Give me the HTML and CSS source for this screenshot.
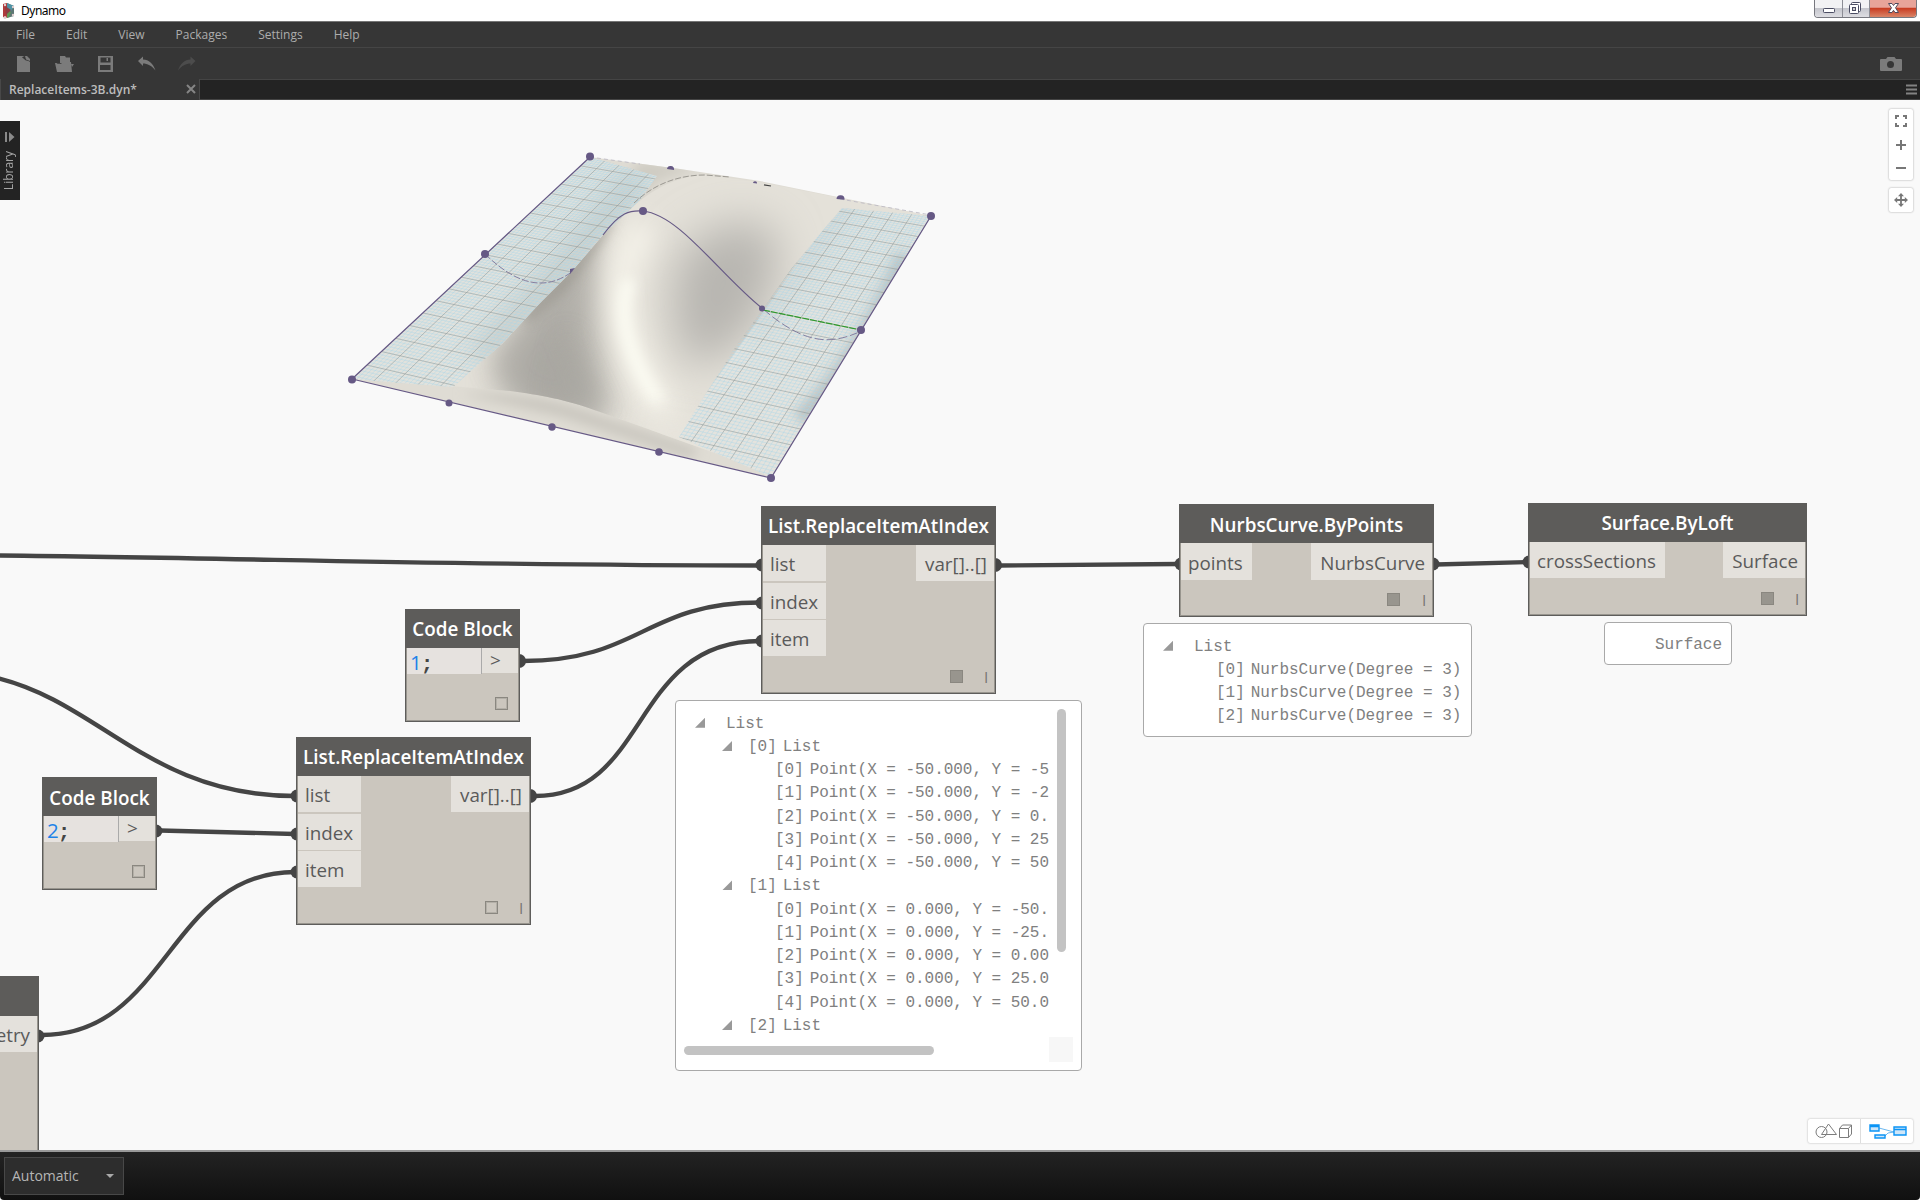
FILE: index.html
```html
<!DOCTYPE html>
<html lang="en">
<head>
<meta charset="utf-8">
<title>Dynamo</title>
<link rel="stylesheet" href="styles.css">
</head>
<body>
<div class="app">
  <header class="titlebar">
    <svg class="logo" width="14" height="18" viewBox="0 0 14 18"><path d="M1 2 5 1V16L1 15z" fill="#b03a3c"/><path d="M5 1 12 4V14L5 16z" fill="#5d7774"/><path d="M5 1 12 4 9 9 5 8z" fill="#4e93a5"/><path d="M5 9 9 10 7 15 5 16z" fill="#5f9a55"/><path d="M3 4 9 8 4 13z" fill="#8f3f44"/><g fill="#e3cfcf"><circle cx="3" cy="3" r="1.2"/><circle cx="11" cy="5" r="1.2"/><circle cx="11" cy="13" r="1.2"/><circle cx="3" cy="15.500" r="1.500"/></g></svg>
    <span class="apptitle">Dynamo</span>
    <div class="winbtns">
      <span class="wb wmin"><svg width="27" height="17"><rect x="8.500" y="8.500" width="11" height="4" rx=".8" fill="#fff" stroke="#4b4d63"/></svg></span>
      <span class="wb wmax"><svg width="26" height="17"><rect x="8.500" y="2.500" width="9" height="9" rx="1" fill="#fff" stroke="#4b4d63"/><rect x="6.500" y="4.500" width="9" height="9" rx="1" fill="#fff" stroke="#4b4d63"/><rect x="9.500" y="7.500" width="3" height="3" fill="#ccc" stroke="#4b4d63"/></svg></span>
      <span class="wb wclose"><svg width="46" height="17"><path d="M18.500 3.500h3.500l1.500 2 1.500-2h3.500l-3 4.300 3 4.700h-3.500l-1.500-2.200-1.500 2.200h-3.500l3-4.700z" fill="#fff" stroke="#504a5c"/></svg></span>
    </div>
  </header>
  <nav class="menu"><span>File</span><span>Edit</span><span>View</span><span>Packages</span><span>Settings</span><span>Help</span></nav>
  <div class="toolbar">
    <svg width="200" height="30" viewBox="0 0 200 30">
      <g fill="#7b7b7b">
        <path d="M17 8h7l6 6v10H17z"/><path d="M24.500 8 30 13.500l-4.500-1.200-3.500-3z" fill="#363636"/><path d="M25 8h2l3 3v2l-4-1.500z"/>
        <path d="M60 8h5l1 1.500h4V14h-4l-1.500 1H60z"/><path d="M55 15h1.500l1 .7H61l2-1.700h8L72 24H57z"/><path d="M71 16h3l-2 3z"/>
        <path fill-rule="evenodd" d="M98 8h15v16H98zM100.500 9.500v5h10v-5zM100 17v5h10.500v-5z"/><path d="M106.500 10h1.500v3h-1.500z"/>
        <path d="M138 13l5-4.500v3c6 0 10 4 12.500 11-4-5-8-7-12.500-7v2.500z"/>
      </g>
      <path d="M195.500 13l-5-4.500v3c-6 0-10 4-12.500 11 4-5 8-7 12.500-7v2.500z" fill="#4c4c4c"/>
    </svg>
    <svg class="camera" width="22" height="16" viewBox="0 0 22 16"><path d="M1 3h5l1.500-2h7L16 3h5a1 1 0 0 1 1 1v10a1 1 0 0 1-1 1H1a1 1 0 0 1-1-1V4a1 1 0 0 1 1-1z" fill="#7b7b7b"/><circle cx="10.500" cy="8.500" r="3.500" fill="#363636"/></svg>
  </div>
  <div class="tabs">
    <div class="tab"><span>ReplaceItems-3B.dyn*</span><svg width="10" height="10"><path d="M1 1l8 8M9 1l-8 8" stroke="#858585" stroke-width="2"/></svg></div>
    <svg class="burger" width="11" height="11"><path d="M0 1.500h11M0 5.500h11M0 9.500h11" stroke="#828282" stroke-width="2"/></svg>
  </div>
  <main class="canvas">
    <svg class="scene" width="1920" height="1050" viewBox="0 100 1920 1050">
      <defs>
        <clipPath id="quad"><path d="M352 379 590 157 680 169 760 181 931 216 771 478z"/></clipPath>
        <clipPath id="hill"><path d="M352 379 454 386 503 343 540 303 573 270 603 235 626 213C648 192 674 176 705 175L760 182 931 216 771 478 742 463C690 444 640 426 600 412C565 399 540 395 510 391C460 387 400 381 352 379z"/></clipPath>
        <clipPath id="gridL"><path d="M352 379 590 157 657 176 640 200 603 235 573 270 540 303 503 343 453 387 400 383z"/></clipPath>
        <clipPath id="gridR"><path d="M842 208 824 229 792 268 763 309 732 352 726 362 698 406 679 437 771 477 931 216z"/></clipPath>
        <filter id="b6" filterUnits="userSpaceOnUse" x="300" y="100" width="700" height="450"><feGaussianBlur stdDeviation="6"/></filter>
        <filter id="b12" filterUnits="userSpaceOnUse" x="300" y="100" width="700" height="450"><feGaussianBlur stdDeviation="12"/></filter>
        <filter id="b22" filterUnits="userSpaceOnUse" x="300" y="100" width="700" height="450"><feGaussianBlur stdDeviation="22"/></filter>
      </defs>
      <path d="M352 379 590 157 680 169 760 181 931 216 771 478z" fill="#dfdcd4"/>
      <g clip-path="url(#quad)">
        <path d="M460 393C530 392 570 404 610 420L700 450 690 458 560 416z" fill="#c8c5bd" filter="url(#b6)"/>
        <path d="M600 230 660 180 700 168 640 160z" fill="#cfccc3" filter="url(#b6)"/>
      </g>
      <g clip-path="url(#hill)">
        <path d="M340 380 590 150 940 210 775 490z" fill="#e4e1d9"/>
        <path d="M510 350 570 275 595 272 602 400 570 440 500 395z" fill="#adaba5" filter="url(#b22)"/>
        <path d="M490 365 540 295 590 245 605 235 595 280 565 330 605 420 520 400z" fill="#a8a6a0" opacity=".65" filter="url(#b12)"/>
        <path d="M520 318 600 228 620 210 606 238 568 288 530 322z" fill="#8f8c84" opacity=".6" filter="url(#b6)"/>
        <path d="M695 240C670 260 660 320 690 365C740 365 790 290 775 235C755 215 725 220 695 240z" fill="#b8b6b1" filter="url(#b22)"/>
        <path d="M640 235C608 280 616 345 662 408" fill="none" stroke="#f4f2e9" stroke-width="28" stroke-linecap="round" filter="url(#b12)"/>
        <path d="M628 285C618 315 628 355 656 398" fill="none" stroke="#fbfbf2" stroke-width="13" stroke-linecap="round" filter="url(#b6)"/>
        <path d="M565 330C585 360 595 385 612 410L550 400z" fill="#a9a7a1" opacity=".55" filter="url(#b12)"/>
        <path d="M640 440 720 470 700 420 650 410z" fill="#e9e6de" opacity=".6" filter="url(#b12)"/>
      </g>
      <g clip-path="url(#gridL)"><path d="M340 380 590 150 690 170 450 395z" fill="#e1e2dd"/><path d="M640 175 550 285 480 360" fill="none" stroke="#a8b0ae" stroke-width="28" opacity=".4" filter="url(#b12)"/><g class="grid"></g></g>
      <g clip-path="url(#gridR)"><path d="M842 200 670 445 775 480 935 210z" fill="#e3e3de"/><path d="M905 255Q860 360 800 420" fill="none" stroke="#a0aaac" stroke-width="17" opacity=".6" filter="url(#b6)"/><path d="M850 190 750 330" fill="none" stroke="#b4bcbb" stroke-width="22" opacity=".3" filter="url(#b12)"/><g class="grid"></g></g>
      <g fill="none" stroke="#665985" stroke-width="1.200">
        <path d="M590 157 352 379 771 478 931 216"/>
        <path d="M590 157 640 164M840 199 931 215" stroke="#b9b6c2" stroke-width=".8" stroke-dasharray="4 3"/>
        <path d="M603 235C620 212 630 210 643 211C680 215 720 275 763 309"/>
        <path d="M485 254C520 288 548 290 573 271" stroke="#857fa0" stroke-width="1" stroke-dasharray="7 2"/>
        <path d="M763 309C805 345 830 344 857 333" stroke="#857fa0" stroke-width="1" stroke-dasharray="9 3"/>
        <path d="M763 310 861 330" stroke="#2f9a2c" stroke-dasharray="7 1"/>
        <path d="M634 203C655 183 680 175 705 175L730 177" stroke="#8a8882" stroke-width=".8" stroke-dasharray="6 2"/>
        <path d="M764 184.800 771 186" stroke="#444" stroke-width="1.200"/>
      </g>
      <g fill="#665985">
        <circle cx="352" cy="379.500" r="4"/><circle cx="590" cy="156.500" r="4"/><circle cx="485" cy="254" r="4"/><circle cx="449" cy="403" r="3.500"/><circle cx="552" cy="427" r="3.700"/><circle cx="659" cy="452" r="3.800"/><circle cx="771" cy="478" r="4"/><circle cx="861" cy="330" r="4"/><circle cx="931" cy="216" r="4"/><circle cx="643" cy="211" r="4"/><circle cx="762" cy="308.500" r="3"/>
        <path d="M570 274v-5l5-1zM667 169a3.500 3.500 0 0 1 7 1zM753 183a2 2 0 0 1 4 .5zM836.500 199a4 4 0 0 1 8 .7z"/>
      </g>
      <g fill="none" stroke="#454545" stroke-width="4.300">
        <path d="M0 555.500C250 558 450 565.500 760 565.500"/>
        <path d="M523 661C640 661 645 602.500 760 602.500"/>
        <path d="M535 796C650 796 630 641 760 641"/>
        <path d="M-5 677.500C100 702 150 796 295 796"/>
        <path d="M160 830.500 295 834"/>
        <path d="M42 1035C168 1035 168 872 295 872"/>
        <path d="M1000 565.500 1178 564"/>
        <path d="M1436 564.500 1527 562"/>
      </g>
      <g fill="#454545">
        <circle cx="762" cy="565" r="6.500"/><circle cx="762" cy="603" r="6.500"/><circle cx="762" cy="641" r="6.500"/><circle cx="995" cy="565" r="7"/>
        <circle cx="297" cy="796" r="6.500"/><circle cx="297" cy="834" r="6.500"/><circle cx="297" cy="872" r="6.500"/><circle cx="530" cy="796" r="7"/>
        <circle cx="519" cy="661" r="7"/><circle cx="156" cy="831" r="6.500"/><circle cx="38" cy="1036" r="6.500"/>
        <circle cx="1181" cy="564" r="6.500"/><circle cx="1433" cy="564" r="6.500"/><circle cx="1529" cy="562" r="6.500"/>
      </g>
    </svg>

    <section class="node n-a"><h2>List.ReplaceItemAtIndex</h2><div class="ports"><div class="ins three"><span>list</span><span>index</span><span>item</span></div><div class="outs"><span>var[]..[]</span></div></div><i class="box on"></i><b class="lace">l</b></section>
    <section class="node n-b"><h2>List.ReplaceItemAtIndex</h2><div class="ports"><div class="ins three"><span>list</span><span>index</span><span>item</span></div><div class="outs"><span>var[]..[]</span></div></div><i class="box"></i><b class="lace">l</b></section>
    <section class="node n-nc"><h2>NurbsCurve.ByPoints</h2><div class="ports"><div class="ins"><span>points</span></div><div class="outs"><span>NurbsCurve</span></div></div><i class="box on"></i><b class="lace">l</b></section>
    <section class="node n-s"><h2>Surface.ByLoft</h2><div class="ports"><div class="ins"><span>crossSections</span></div><div class="outs"><span>Surface</span></div></div><i class="box on"></i><b class="lace">l</b></section>
    <section class="node n-c1 code"><h2>Code Block</h2><div class="ports"><div class="src"><em>1</em>;</div><div class="gt">&gt;</div></div><i class="box"></i></section>
    <section class="node n-c2 code"><h2>Code Block</h2><div class="ports"><div class="src"><em>2</em>;</div><div class="gt">&gt;</div></div><i class="box"></i></section>
    <section class="node n-l"><h2></h2><div class="ports"><div></div><div class="outs"><span>etry</span></div></div></section>

    <div class="preview p-a">
      <div class="rows">
        <div class="row l0"><i class="tri"></i><span>List</span></div>
        <div class="row l1"><i class="tri"></i><u>[0]</u><span>List</span></div>
        <div class="row l2"><u>[0]</u><span>Point(X = -50.000, Y = -5</span></div>
        <div class="row l2"><u>[1]</u><span>Point(X = -50.000, Y = -2</span></div>
        <div class="row l2"><u>[2]</u><span>Point(X = -50.000, Y = 0.</span></div>
        <div class="row l2"><u>[3]</u><span>Point(X = -50.000, Y = 25</span></div>
        <div class="row l2"><u>[4]</u><span>Point(X = -50.000, Y = 50</span></div>
        <div class="row l1"><i class="tri"></i><u>[1]</u><span>List</span></div>
        <div class="row l2"><u>[0]</u><span>Point(X = 0.000, Y = -50.</span></div>
        <div class="row l2"><u>[1]</u><span>Point(X = 0.000, Y = -25.</span></div>
        <div class="row l2"><u>[2]</u><span>Point(X = 0.000, Y = 0.00</span></div>
        <div class="row l2"><u>[3]</u><span>Point(X = 0.000, Y = 25.0</span></div>
        <div class="row l2"><u>[4]</u><span>Point(X = 0.000, Y = 50.0</span></div>
        <div class="row l1"><i class="tri"></i><u>[2]</u><span>List</span></div>
      </div>
      <i class="vbar"></i><i class="hbar"></i><i class="grip"></i>
    </div>
    <div class="preview p-nc">
      <div class="rows">
        <div class="row l0"><i class="tri"></i><span>List</span></div>
        <div class="row lx"><u>[0]</u><span>NurbsCurve(Degree = 3)</span></div>
        <div class="row lx"><u>[1]</u><span>NurbsCurve(Degree = 3)</span></div>
        <div class="row lx"><u>[2]</u><span>NurbsCurve(Degree = 3)</span></div>
      </div>
    </div>
    <div class="preview p-s">Surface</div>

    <aside class="library"><svg width="10" height="10"><path d="M0 0h2v10H0zM4 0l5.500 5L4 10z" fill="#8a8a8a"/></svg><span>Library</span></aside>
    <div class="zoom">
      <svg width="12" height="12"><path d="M1 4V1h3M8 1h3v3M11 8v3H8M4 11H1V8" fill="none" stroke="#777" stroke-width="2"/></svg>
      <svg width="12" height="12"><path d="M1 6h10M6 1v10" stroke="#777" stroke-width="2"/></svg>
      <svg width="12" height="12"><path d="M1 5h10" stroke="#777" stroke-width="2"/></svg>
    </div>
    <div class="pan"><svg width="14" height="14" viewBox="0 0 14 14"><path d="M2 7h10M7 2v10" stroke="#777" stroke-width="1.800"/><path d="M7 0l3 3.200H4zM7 14l3-3.200H4zM0 7l3.200-3v6zM14 7l-3.200-3v6z" fill="#777"/></svg></div>
    <div class="modes">
      <span class="mode"><svg width="38" height="18" fill="none" stroke="#7c7c7c"><circle cx="6.500" cy="10" r="5.500"/><path d="M6.500 12.500 13.500 2 21.500 12.500z"/><path d="M24.500 6.500h9v9h-9zM24.500 6.500l3-3.500h9v9l-3 3.500M33.500 6.500l3-3.500"/></svg></span>
      <span class="mode"><svg width="38" height="18" fill="#cfe6f8" stroke="#0b94f5" stroke-width="1.400"><path d="M10 6l15 4-6 1-3 3" fill="none" stroke="#6bb8f0" stroke-width="1"/><path d="M1 3h9v6H1zM1 4.500h9M6 13h10v3H6zM25 5h12v8H25zM25 7.500h12"/></svg></span>
    </div>
  </main>
  <footer class="status"><div class="select"><span>Automatic</span><svg width="8" height="4"><path d="M0 0h8L4 4z" fill="#a9a9a9"/></svg></div></footer>
</div>
<script src="grid.js"></script>
</body>
</html>
```
FILE: styles.css
```css
* { box-sizing: border-box; }
body { margin: 0; background: #fff; font-family: "Open Sans", sans-serif; overflow: hidden; }
.app { width: 1920px; height: 1200px; display: flex; flex-direction: column; }
svg { display: block; flex: none; }
.titlebar { height: 22px; flex: none; background: #fff; border-bottom: 1px solid #767676; display: flex; align-items: center; padding-left: 2px; position: relative; }
.apptitle { font: 12px "Noto Sans", sans-serif; letter-spacing: -.5px; color: #000; margin-left: 5px; }
.winbtns { margin-left: auto; margin-right: 3px; align-self: flex-start; display: flex; height: 18px; border: 1px solid #77787f; border-top: 0; border-radius: 0 0 4px 4px; overflow: hidden; }
.wb { background: linear-gradient(#f2f2f4 45%, #c5c6cd 50%, #dddde2); border-right: 1px solid #8c8d95; }
.wclose { background: linear-gradient(#e8a49a 42%, #c93e24 50%, #d98467); border: 0; }
.menu { height: 26px; flex: none; background: #363636; border-bottom: 1px solid #454545; display: flex; gap: 31px; align-items: center; padding: 0 16px; font-size: 12px; color: #adadad; }
.toolbar { height: 31px; flex: none; background: #363636; display: flex; justify-content: space-between; align-items: flex-start; }
.camera { margin: 8px 18px 0 0; }
.tabs { height: 21px; flex: none; background: #232323; border-top: 1px solid #444; border-bottom: 1px solid #444; display: flex; justify-content: space-between; align-items: center; padding-right: 3px; }
.tab { width: 200px; height: 21px; margin-top: -1px; background: #363636; border-right: 1px solid #484848; border-left: 1px solid #484848; padding: 0 3px 0 8px; display: flex; align-items: center; justify-content: space-between; color: #bdbdbd; font-size: 12px; font-weight: 600; }
.canvas { position: relative; flex: 1; min-height: 0; background: #f9f9f9; overflow: hidden; }
.scene { position: absolute; left: 0; top: 0; }
.node { position: absolute; width: 235px; height: 188px; background: #cbc6be; border: 1px solid #5e5d5b; box-shadow: inset -1px -1px 0 #98958e, inset 1px 0 0 #98958e; color: #5a5a5a; }
.node h2 { margin: -1px; height: 39px; background: #5d5c5a; color: #fff; font-size: 18.850px; font-weight: 600; line-height: 41px; text-align: center; white-space: nowrap; }
.ports { display: flex; justify-content: space-between; align-items: flex-start; margin: 1px 1px 0 1px; }
.ports span { display: block; background: #e4e1dc; height: 36px; line-height: 39px; font-size: 18.800px; padding: 0 9px 0 7px; white-space: nowrap; }
.ins { display: flex; flex-direction: column; gap: 1.500px; }
.three { width: 63px; }
.ports .outs span { padding: 0 7px 0 9px; }
.box { position: absolute; right: 32px; bottom: 10px; width: 13px; height: 13px; border: 1px solid #8a8780; box-shadow: inset 0 0 0 1px #b3afa7; }
.box.on { background: #98958e; box-shadow: none; }
.lace { position: absolute; right: 7px; bottom: 6px; font-size: 15px; font-weight: 400; line-height: 20px; color: #77746e; }
.n-a { left: 761px; top: 406px; }
.n-b { left: 296px; top: 637px; }
.n-nc { left: 1179px; top: 404px; width: 255px; height: 113px; }
.n-nc h2 { line-height: 42px; }
.n-nc .box { right: 33px; }
.n-nc .ports span { height: 37px; line-height: 40px; }
.n-s { left: 1528px; top: 403px; width: 279px; height: 113px; }
.n-c1 { left: 405px; top: 509px; }
.n-c2 { left: 42px; top: 677px; height: 114px; }
.n-c2 h2 { line-height: 42px; }
.n-l { left: -100px; top: 876px; width: 139px; height: 300px; }
.n-l h2 { height: 40px; }
.code { width: 115px; height: 113px; }
.code .box { right: 11px; bottom: 11px; }
.src { width: 75px; height: 26px; background: #e6e2df; border-right: 1px solid #aaa; font: bold 21px/26px "Liberation Mono", monospace; color: #444; padding-left: 3px; }
.src em { font: 20.500px "Open Sans", sans-serif; color: #1e82e8; margin-right: -1px; }
.gt { flex: 1; height: 25px; background: #e4e1dc; font-size: 19px; line-height: 25px; text-align: center; padding-right: 9px; }
.preview { position: absolute; background: #fff; border: 1px solid #a9a9a9; border-radius: 4px; font: 16px/23.200px "Liberation Mono", monospace; letter-spacing: -.03px; color: #808080; overflow: hidden; }
.row { display: flex; height: 23.250px; align-items: center; white-space: pre; }
.row u { text-decoration: none; margin-right: 6px; }
.tri { width: 10px; height: 10px; background: #999; clip-path: polygon(100% 0, 100% 100%, 0 100%); margin: 0 16px 3px 0; flex: none; }
.l0 { padding-left: 19px; }
.l0 .tri { margin-right: 21px; }
.l1 { padding-left: 46px; }
.l2 { padding-left: 99px; }
.lx { padding-left: 72px; }
.p-a { left: 675px; top: 600px; width: 407px; height: 371px; padding: 11.500px 0 0 0; }
.p-nc { left: 1143px; top: 523px; width: 329px; height: 114px; padding-top: 11.500px; }
.p-s { left: 1604px; top: 522px; width: 128px; height: 43px; line-height: 44px; padding-left: 50px; }
.vbar, .hbar, .grip { position: absolute; background: #c3c3c3; border-radius: 5px; }
.vbar { right: 15px; top: 8px; width: 9px; height: 243px; }
.hbar { left: 8px; bottom: 15px; width: 250px; height: 9px; }
.grip { right: 8px; bottom: 8px; width: 24px; height: 25px; background: #f7f7f7; border-radius: 0; }
.library { position: absolute; left: 0; top: 21px; width: 20px; height: 79px; background: #232323; color: #a5a5a5; display: flex; flex-direction: column; align-items: center; padding-top: 11px; gap: 9px; }
.library span { writing-mode: vertical-rl; transform: rotate(180deg); font-size: 12px; line-height: 20px; margin-left: -3px; }
.zoom, .pan { position: absolute; right: 7px; width: 24px; background: #fff; border-radius: 2px; box-shadow: 0 0 2px #999; display: flex; flex-direction: column; align-items: center; }
.zoom { top: 9px; height: 71px; padding-top: 6px; gap: 12px; }
.pan { top: 88px; height: 24px; justify-content: center; }
.modes { position: absolute; right: 7px; top: 1019px; width: 105px; height: 24px; background: #fff; border-radius: 2px; box-shadow: 0 0 2px #aaa; display: flex; }
.mode { flex: 1; display: flex; align-items: center; justify-content: center; }
.mode + .mode { border-left: 1px solid #ddd; }
.mode + .mode svg { margin-left: 2px; }
.status { height: 50px; flex: none; border-top: 2px solid #999; background: linear-gradient(#232323, #101010); border-radius: 0 0 4px 4px; padding: 5px 4px; }
.select { width: 120px; height: 38px; background: #2d2d2d; border: 1px solid #484848; color: #b5b5b5; font-size: 14px; line-height: 36px; display: flex; align-items: center; justify-content: space-between; padding: 0 9px 1px 7px; }
```
FILE: grid.js
```js
// Projects the 100 x 100 unit ground grid onto the surface's corner points.
(function () {
  const [p0, p1, p2, p3] = [[352, 379], [590, 157], [931, 216], [771, 478]];
  const dx1 = p1[0] - p2[0], dx2 = p3[0] - p2[0], sx = p0[0] - p1[0] + p2[0] - p3[0];
  const dy1 = p1[1] - p2[1], dy2 = p3[1] - p2[1], sy = p0[1] - p1[1] + p2[1] - p3[1];
  const den = dx1 * dy2 - dx2 * dy1;
  const g = (sx * dy2 - dx2 * sy) / den, h = (dx1 * sy - sx * dy1) / den;
  const a = p1[0] - p0[0] + g * p1[0], b = p3[0] - p0[0] + h * p3[0];
  const d = p1[1] - p0[1] + g * p1[1], e = p3[1] - p0[1] + h * p3[1];
  const at = (u, v) => {
    const w = g * u + h * v + 1;
    return ((a * u + b * v + p0[0]) / w).toFixed(2) + " " + ((d * u + e * v + p0[1]) / w).toFixed(2);
  };
  let minor = "", major = "";
  for (let i = 0; i <= 100; i++) {
    const t = i / 100;
    const seg = "M" + at(t, 0) + "L" + at(t, 1) + "M" + at(0, t) + "L" + at(1, t);
    if (i % 5 === 0) major += seg; else minor += seg;
  }
  document.querySelectorAll(".grid").forEach(function (el) {
    el.innerHTML = '<path d="' + minor + '" fill="none" stroke="#a9d5ea" stroke-width=".6" opacity=".7"/>' +
      '<path d="' + major + '" fill="none" stroke="#8c9a9c" stroke-width=".8" opacity=".7"/>';
  });
})();
```
